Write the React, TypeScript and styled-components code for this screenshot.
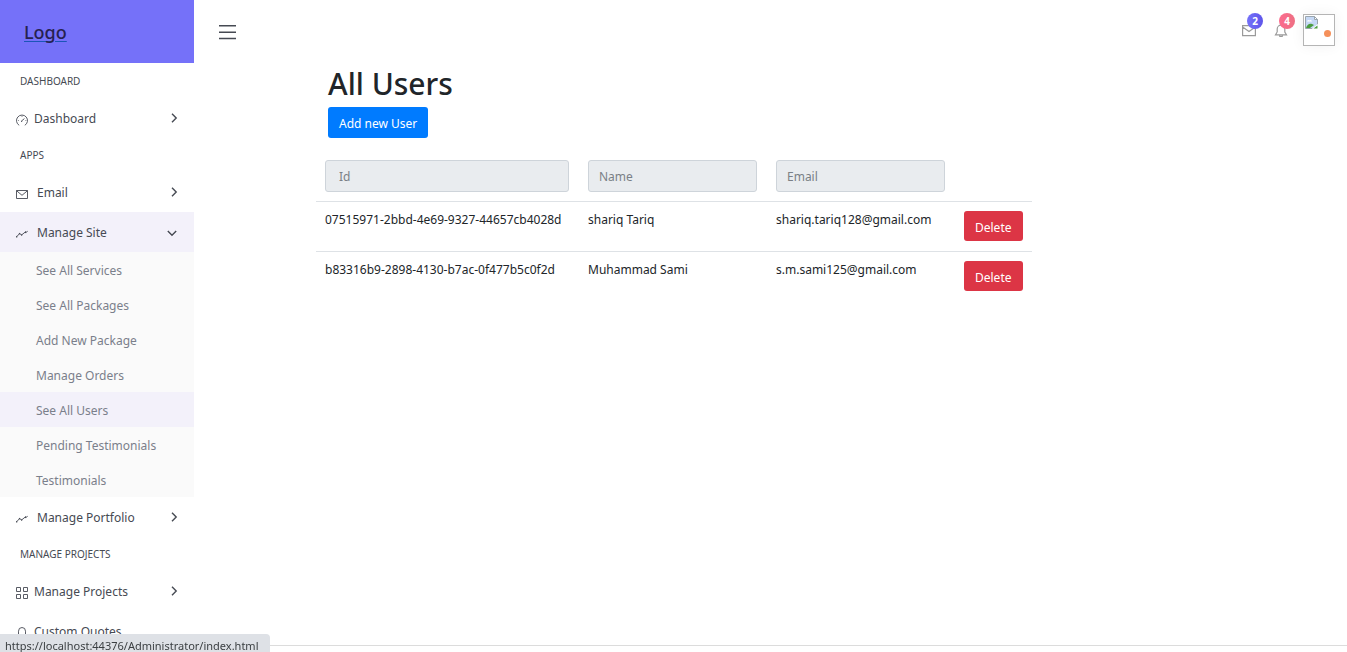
import React from "react";
import styled, { createGlobalStyle } from "styled-components";

const GlobalStyle = createGlobalStyle`
  *, *::before, *::after { box-sizing: border-box; }
  body {
    margin: 0;
    background: #fff;
    color: #212529;
    font-family: "Noto Sans", "Open Sans", sans-serif;
    font-size: 12px;
    line-height: 20px;
  }
  button, input { font: inherit; }
  a { color: inherit; text-decoration: none; }
`;

const Page = styled.div`
  display: flex;
  height: 100vh;
  overflow: hidden;
`;

const Sidebar = styled.aside`
  flex: 0 0 194px;
  overflow: hidden;
`;

const Brand = styled.div`
  display: flex;
  align-items: center;
  height: 63px;
  padding: 0 24px;
  background: #7571f9;
`;

const BrandLink = styled.a`
  color: #27214f;
  font-size: 18px;
  font-weight: 500;
  line-height: 24px;
  text-decoration: underline;
  text-decoration-color: #1b55b8;
  text-decoration-thickness: 1px;
  text-underline-offset: 2px;
`;

const Nav = styled.nav`
  padding-top: 1px;
`;

const SectionLabel = styled.h2`
  display: flex;
  align-items: center;
  height: 34px;
  margin: 0;
  padding: 0 20px;
  color: #464a53;
  font-size: 10px;
  font-weight: 400;
  text-transform: uppercase;
`;

const MenuLink = styled.a<{ $active?: boolean; $wide?: boolean }>`
  display: flex;
  align-items: center;
  gap: ${(p) => (p.$wide ? 9 : 6)}px;
  height: 40px;
  padding: 2px 16px 0;
  background: ${(p) => (p.$active ? "#f3f1fa" : "transparent")};
  color: #464a53;

  > span { flex: 1; }
`;

const SubMenu = styled.ul`
  margin: 0;
  padding: 0;
  list-style: none;
  background: #fafafa;
`;

const SubLink = styled.a<{ $active?: boolean }>`
  display: flex;
  align-items: center;
  height: 35px;
  padding: 2px 36px 0;
  background: ${(p) => (p.$active ? "#f3f1fa" : "transparent")};
  color: #7a7f8b;
  white-space: nowrap;
`;

const Main = styled.div`
  display: flex;
  flex: 1;
  flex-direction: column;
  min-width: 0;
`;

const TopBar = styled.header`
  display: flex;
  align-items: center;
  justify-content: space-between;
  height: 64px;
  padding: 0 12px 0 24px;
`;

const IconButton = styled.button`
  position: relative;
  display: flex;
  padding: 0;
  border: 0;
  background: none;
  cursor: pointer;
`;

const Actions = styled.div`
  display: flex;
  align-items: center;
  gap: 15px;
  padding-bottom: 4px;
`;

const Alerts = styled.div`
  display: flex;
  gap: 18px;
`;

const Badge = styled.span<{ $from: string; $to: string }>`
  position: absolute;
  top: -10px;
  right: -7px;
  width: 16px;
  height: 16px;
  border-radius: 50%;
  background: linear-gradient(to right, ${(p) => p.$from}, ${(p) => p.$to});
  color: #fff;
  font-size: 10px;
  font-weight: 700;
  line-height: 16px;
  text-align: center;
`;

const Avatar = styled.div`
  position: relative;
  width: 32px;
  height: 32px;
  border: 1px solid #b5b5b5;
  background: #fff;
  box-shadow: 0 0 14px rgba(0, 0, 0, 0.06);

  svg { display: block; }
`;

const Presence = styled.span`
  position: absolute;
  right: 3px;
  bottom: 8px;
  width: 7px;
  height: 7px;
  border-radius: 50%;
  background: #f5905a;
`;

const Content = styled.main`
  flex: 1;
  min-height: 0;
  padding: 0 122px;
`;

const Intro = styled.div`
  padding: 1px 12px 13px;
`;

const Title = styled.h1`
  margin: 0 0 4px;
  font-size: 30px;
  font-weight: 500;
  line-height: 38px;
`;

const ActionButton = styled.button<{ $danger?: boolean }>`
  display: block;
  height: ${(p) => (p.$danger ? 30 : 31)}px;
  padding: 3px 11px 0;
  border: 0;
  border-radius: 3px;
  background: ${(p) => (p.$danger ? "#dc3545" : "#007bff")};
  color: #fff;
  white-space: nowrap;
  cursor: pointer;
`;

const Table = styled.table`
  width: 716px;
  max-width: 100%;
  border-collapse: separate;
  border-spacing: 0;
  table-layout: fixed;
`;

const Column = styled.col<{ $width: number }>`
  width: ${(p) => p.$width}px;
`;

const HeadCell = styled.th`
  padding: 9px 10px 9px 9px;
  font-weight: 400;
`;

const Cell = styled.td`
  height: 50px;
  padding: 8px 10px 0 9px;
  border-top: 1px solid #dee2e6;
  vertical-align: top;
  white-space: nowrap;

  > button { margin-top: 1px; }
`;

const Filter = styled.input<{ $inset?: boolean }>`
  display: block;
  width: 100%;
  height: 32px;
  padding: 0 ${(p) => (p.$inset ? 13 : 10)}px;
  border: 1px solid #ced4da;
  border-radius: 3px;
  outline: 0;
  background: #e9ecef;

  &::placeholder { color: #7a8086; opacity: 1; }
`;

const Footer = styled.footer`
  height: 7px;
  border-top: 1px solid #dcdcdc;
`;

const StatusBar = styled.div`
  position: fixed;
  bottom: 0;
  left: 0;
  height: 18px;
  padding: 3px 12px 0 5px;
  border-top-right-radius: 4px;
  background: #dee1e6;
  color: #3c4043;
  font-size: 11px;
  line-height: 18px;
  white-space: nowrap;
`;

const Glyph = styled.svg`
  display: block;
  flex: none;
  margin-top: 2px;
  fill: none;
  stroke: currentColor;
`;

type IconName = "gauge" | "mail" | "graph" | "grid" | "quote";

const iconShapes: Record<IconName, React.ReactNode> = {
  gauge: (
    <>
      <path d="M3.200 11.300A5.500 5.500 0 1 1 8.800 11.300" />
      <path d="M5.300 7.200L8.400 4.600M5 7.400h1.200" />
      <path d="M2 6.500h1M9.300 6.500h1M6 2v1" strokeWidth="0.6" />
    </>
  ),
  mail: (
    <>
      <path d="M.5 2.500h11v8H.5z" />
      <path d="M.5 2.700L6 7.300l5.500-4.600" />
    </>
  ),
  graph: (
    <>
      <path d="M.8 8.600L3.500 5.600l2.200 1.300L9.300 4l1 .5L11.600 2.900" />
      <path d="M.2 9.200l1-.8M3 5.800l1-.5M5.200 7h1M9 4l1 .5" strokeWidth="1.4" />
    </>
  ),
  grid: <path d="M.5.5h4v4h-4zM7.500.5h4v4h-4zM.5 7.500h4v4h-4zM7.500 7.500h4v4h-4z" />,
  quote: <path d="M2.500 7.500V4.200a3.500 3.700 0 0 1 7 0v3.300L11 9.500H8M2.500 7.500L1 9.500h3" />,
};

const MenuIcon = ({ name }: { name: IconName }) => (
  <Glyph width="12" height="12" viewBox="0 0 12 12" strokeWidth="0.9" aria-hidden="true">
    {iconShapes[name]}
  </Glyph>
);

const Chevron = styled.svg<{ $open?: boolean }>`
  flex: none;
  margin: ${(p) => (p.$open ? "0 2px 0 0" : "0 0 2px")};
  fill: none;
  stroke: #464a53;
  stroke-width: 1.4;
  transform: ${(p) => (p.$open ? "rotate(90deg)" : "none")};
`;

interface MenuItemProps {
  icon: IconName;
  label: string;
  wide?: boolean;
  open?: boolean;
  plain?: boolean;
}

const MenuItem = ({ icon, label, wide, open, plain }: MenuItemProps) => (
  <MenuLink href="#" $active={open} $wide={wide}>
    <MenuIcon name={icon} />
    <span>{label}</span>
    {!plain && (
      <Chevron width="8" height="10" viewBox="0 0 8 10" $open={open} aria-hidden="true">
        <path d="M2 .8L6.200 5 2 9.200" />
      </Chevron>
    )}
  </MenuLink>
);

const siteLinks = [
  "See All Services",
  "See All Packages",
  "Add New Package",
  "Manage Orders",
  "See All Users",
  "Pending Testimonials",
  "Testimonials",
];

const users = [
  { id: "07515971-2bbd-4e69-9327-44657cb4028d", name: "shariq Tariq", email: "shariq.tariq128@gmail.com" },
  { id: "b83316b9-2898-4130-b7ac-0f477b5c0f2d", name: "Muhammad Sami", email: "s.m.sami125@gmail.com" },
];

export default function App() {
  return (
    <>
      <GlobalStyle />
      <Page>
        <Sidebar>
          <Brand>
            <BrandLink href="#">Logo</BrandLink>
          </Brand>
          <Nav>
            <SectionLabel>Dashboard</SectionLabel>
            <MenuItem icon="gauge" label="Dashboard" />
            <SectionLabel>Apps</SectionLabel>
            <MenuItem icon="mail" label="Email" wide />
            <MenuItem icon="graph" label="Manage Site" wide open />
            <SubMenu>
              {siteLinks.map((label) => (
                <li key={label}>
                  <SubLink href="#" $active={label === "See All Users"}>{label}</SubLink>
                </li>
              ))}
            </SubMenu>
            <MenuItem icon="graph" label="Manage Portfolio" wide />
            <SectionLabel>Manage Projects</SectionLabel>
            <MenuItem icon="grid" label="Manage Projects" />
            <MenuItem icon="quote" label="Custom Quotes" plain />
          </Nav>
        </Sidebar>
        <Main>
          <TopBar>
            <IconButton type="button" aria-label="Toggle menu">
              <svg width="19" height="16" viewBox="0 0 19 16" stroke="#464a53" strokeWidth="1.600" aria-hidden="true">
                <path d="M1 1.800h17M1 8.200h17M1 14.500h17" />
              </svg>
            </IconButton>
            <Actions>
              <Alerts>
                <IconButton type="button" aria-label="Messages">
                  <svg width="14" height="14" viewBox="0 0 14 14" fill="none" stroke="#9a9a9a" strokeWidth="1.200" aria-hidden="true">
                    <path d="M.6 2.600h12.800v10H.6zM.6 4L7 8.500 13.400 4" />
                  </svg>
                  <Badge $from="#7571f9" $to="#5e55ea">2</Badge>
                </IconButton>
                <IconButton type="button" aria-label="Notifications">
                  <svg width="14" height="14" viewBox="0 0 14 14" fill="none" stroke="#9a9a9a" strokeWidth="1.200" aria-hidden="true">
                    <path d="M3.200 9V6a3.800 3.800 0 0 1 7.600 0v3l1.700 2.800H1.500L3.200 9M5.800 12v1.500h2.400V12M7 1v1" />
                  </svg>
                  <Badge $from="#fc6c8e" $to="#ee6f83">4</Badge>
                </IconButton>
              </Alerts>
              <Avatar>
                <svg width="16" height="16" viewBox="0 0 16 16" role="img" aria-label="User">
                  <path d="M1.500 1.500h9l3 3v9h-12z" fill="#c5d8f5" stroke="#9aa5ad" />
                  <path d="M10.500 1.500v3h3z" fill="#fff" stroke="#9aa5ad" />
                  <path d="M3 6.500a1.500 1.500 0 0 1 2.500-1A1.500 1.500 0 0 1 8 6.500z" fill="#fff" />
                  <path d="M2 13c1-3 3-5 6-4l2 1-4 3z" fill="#4a9c3f" />
                  <path d="M7 14.500l7.500-6v6z" fill="#fff" />
                  <path d="M9.500 13.500h4v-3z" fill="#4a9c3f" />
                </svg>
                <Presence />
              </Avatar>
            </Actions>
          </TopBar>
          <Content>
            <Intro>
              <Title>All Users</Title>
              <ActionButton type="button">Add new User</ActionButton>
            </Intro>
            <Table>
              <colgroup>
                <Column $width={263} />
                <Column $width={188} />
                <Column $width={188} />
                <Column $width={77} />
              </colgroup>
              <thead>
                <tr>
                  <HeadCell><Filter placeholder="Id" aria-label="Id" readOnly $inset /></HeadCell>
                  <HeadCell><Filter placeholder="Name" aria-label="Name" readOnly /></HeadCell>
                  <HeadCell><Filter placeholder="Email" aria-label="Email" readOnly /></HeadCell>
                  <HeadCell />
                </tr>
              </thead>
              <tbody>
                {users.map((user) => (
                  <tr key={user.id}>
                    <Cell>{user.id}</Cell>
                    <Cell>{user.name}</Cell>
                    <Cell>{user.email}</Cell>
                    <Cell><ActionButton type="button" $danger>Delete</ActionButton></Cell>
                  </tr>
                ))}
              </tbody>
            </Table>
          </Content>
          <Footer />
        </Main>
      </Page>
      <StatusBar>https://localhost:44376/Administrator/index.html</StatusBar>
    </>
  );
}
